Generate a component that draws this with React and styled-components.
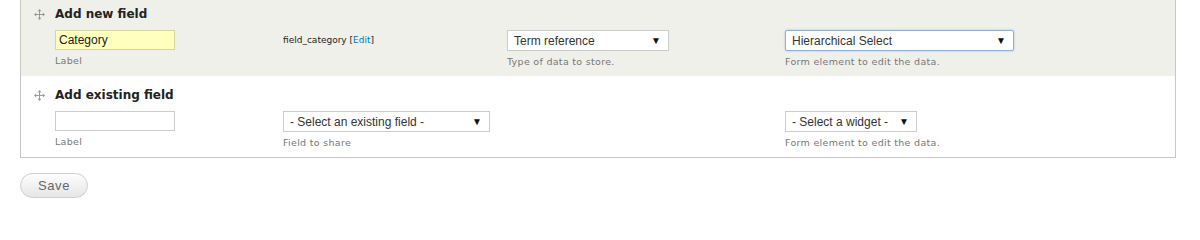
import styled, { createGlobalStyle } from 'styled-components';

const GlobalStyle = createGlobalStyle`
  body {
    margin: 0;
    background: #ffffff;
    font-family: "DejaVu Sans", "Liberation Sans", sans-serif;
    color: #333;
  }
`;

const Page = styled.div`
  padding: 0 24px 0 20px;
`;

const Table = styled.div`
  margin-top: -6px;
  border: 1px solid #c8c8c2;
`;

const Row = styled.div`
  display: grid;
  grid-template-columns: 34px 228px 224px 278px 1fr;
  grid-template-rows: 17px auto;
  row-gap: 7px;
  padding: 11px 0 8px;
  background: ${({ $shaded }) => ($shaded ? '#f0f0eb' : '#ffffff')};
  align-items: start;
`;

const Handle = styled.div`
  display: flex;
  align-items: center;
  justify-content: center;
  height: 17px;
  padding-left: 2px;
`;

const Title = styled.div`
  grid-column: 2 / -1;
  font-size: 12px;
  line-height: 17px;
  font-weight: bold;
  color: #222;
`;

const Cell = styled.div`
  display: flex;
  flex-direction: column;
  align-items: flex-start;
`;

const TextInput = styled.div`
  box-sizing: border-box;
  width: 120px;
  height: 20px;
  border: 1px solid ${({ $filled }) => ($filled ? '#d6d6a0' : '#cccccc')};
  background: ${({ $filled }) => ($filled ? '#ffffbe' : '#ffffff')};
  padding: 0 3px;
  font-family: "Liberation Sans", Arial, sans-serif;
  font-size: 12px;
  line-height: 18px;
  color: #222;
`;

const Select = styled.div`
  box-sizing: border-box;
  display: flex;
  align-items: center;
  justify-content: space-between;
  width: ${({ $w }) => $w}px;
  height: 21px;
  padding: 0 7px 0 6px;
  border: 1px solid ${({ $focus }) => ($focus ? '#8fb0d8' : '#cccccc')};
  box-shadow: ${({ $focus }) => ($focus ? '0 0 2px rgba(90, 140, 210, 0.5)' : 'none')};
  border-radius: ${({ $focus }) => ($focus ? '2px' : '0')};
  background: #ffffff;
  font-family: "Liberation Sans", Arial, sans-serif;
  font-size: 12px;
  color: #333;
`;

const Arrow = styled.span`
  font-size: 10px;
  color: #111;
`;

const Description = styled.div`
  margin-top: 4px;
  font-size: 9.5px;
  line-height: 13px;
  letter-spacing: 0.3px;
  color: #777;
`;

const MachineName = styled.div`
  height: 20px;
  line-height: 20px;
  font-size: 9px;
  color: #222;

  a {
    color: #0074bd;
    text-decoration: none;
  }
`;

const SaveButton = styled.button`
  margin-top: 15px;
  width: 68px;
  height: 25px;
  border: 1px solid #cfcfcf;
  border-radius: 13px;
  background: linear-gradient(#fdfdfd, #e6e6e6);
  font-family: "Liberation Sans", Arial, sans-serif;
  font-size: 13px;
  color: #666;
  letter-spacing: 0.6px;
  padding: 0;
`;

const DragIcon = () => (
  <svg width="11" height="11" viewBox="0 0 11 11" fill="#9a9a9a">
    <rect x="5" y="2" width="1" height="7" />
    <rect x="2" y="5" width="7" height="1" />
    <path d="M5.5 0 L7.5 2.2 L3.5 2.2 Z" />
    <path d="M5.5 11 L7.5 8.8 L3.5 8.8 Z" />
    <path d="M0 5.5 L2.2 3.5 L2.2 7.5 Z" />
    <path d="M11 5.5 L8.8 3.5 L8.8 7.5 Z" />
  </svg>
);

const FieldRow = ({ shaded, title, children }) => (
  <Row $shaded={shaded}>
    <Handle>
      <DragIcon />
    </Handle>
    <Title>{title}</Title>
    <div />
    {children}
  </Row>
);

export default function App() {
  return (
    <Page>
      <GlobalStyle />
      <Table>
        <FieldRow shaded title="Add new field">
          <Cell>
            <TextInput $filled>Category</TextInput>
            <Description>Label</Description>
          </Cell>
          <Cell>
            <MachineName>
              field_category [<a href="#edit">Edit</a>]
            </MachineName>
          </Cell>
          <Cell>
            <Select $w={162}>
              Term reference <Arrow>▼</Arrow>
            </Select>
            <Description>Type of data to store.</Description>
          </Cell>
          <Cell>
            <Select $w={229} $focus>
              Hierarchical Select <Arrow>▼</Arrow>
            </Select>
            <Description>Form element to edit the data.</Description>
          </Cell>
        </FieldRow>
        <FieldRow title="Add existing field">
          <Cell>
            <TextInput />
            <Description>Label</Description>
          </Cell>
          <Cell>
            <Select $w={207}>
              - Select an existing field - <Arrow>▼</Arrow>
            </Select>
            <Description>Field to share</Description>
          </Cell>
          <Cell />
          <Cell>
            <Select $w={132}>
              - Select a widget - <Arrow>▼</Arrow>
            </Select>
            <Description>Form element to edit the data.</Description>
          </Cell>
        </FieldRow>
      </Table>
      <SaveButton>Save</SaveButton>
    </Page>
  );
}
